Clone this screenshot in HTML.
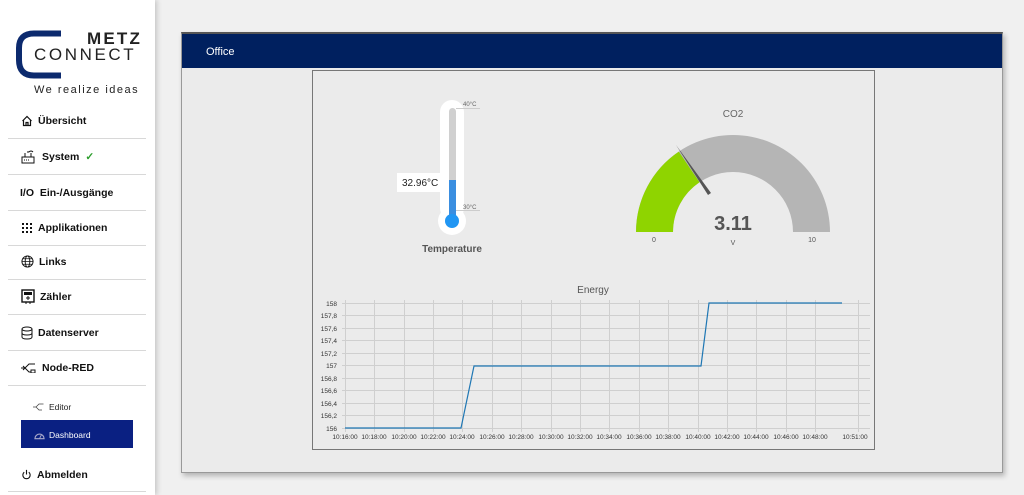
<!DOCTYPE html>
<html><head><meta charset="utf-8">
<style>
*{margin:0;padding:0;box-sizing:border-box}
body{width:1024px;height:495px;overflow:hidden;background:#f0f0f0;font-family:"Liberation Sans",sans-serif;position:relative}
#side{position:absolute;left:0;top:0;width:155px;height:495px;background:#fff;box-shadow:2px 0 5px rgba(0,0,0,.18)}
.item{position:absolute;left:8px;width:138px;height:36px;border-bottom:1px solid #d8d8d8;font-size:10.5px;font-weight:bold;color:#111;display:flex;align-items:center;padding-left:13px}
.item svg{margin-right:5px}
.sub{position:absolute;left:33px;font-size:8.5px;color:#222;display:flex;align-items:center}
#panel{position:absolute;left:181px;top:32px;width:822px;height:441px;background:#ebebeb;border:1px solid #999;border-top:2px solid #555;box-shadow:2px 3px 5px rgba(0,0,0,.25)}
#hdr{position:absolute;left:0;top:0;width:100%;height:34px;background:#00205f;color:#fff;font-size:11px;padding:12px 0 0 24px}
</style></head><body>
<div id="side">
  <svg style="position:absolute;left:15px;top:30px" width="50" height="50"><path d="M46 3.5 H19 Q4 3.5 4 18 V30 Q4 45.5 19 45.5 H46" fill="none" stroke="#0c2a6e" stroke-width="6"/></svg>
  <div style="position:absolute;left:87px;top:29px;font-size:17px;font-weight:bold;letter-spacing:2.2px;color:#222">METZ</div>
  <div style="position:absolute;left:34px;top:45px;font-size:17px;letter-spacing:2.6px;color:#222">CONNECT</div>
  <div style="position:absolute;left:34px;top:84px;font-size:11px;letter-spacing:1.5px;color:#222">We realize ideas</div>
  <div class="item" style="top:103px"><svg width="12" height="12" viewBox="0 0 12 12"><path d="M1.5 6 L6 1.5 L10.5 6 M2.5 5 V10.5 H9.5 V5 M5 10.5 V7.5 H7 V10.5" fill="none" stroke="#111" stroke-width="1.2"/></svg>Übersicht</div>
  <div class="item" style="top:139px"><svg width="16" height="14" viewBox="0 0 16 14"><rect x="1" y="7" width="12" height="6" fill="none" stroke="#111"/><path d="M3 10h1M5 10h1M7 10h1M4 7 V3 M10 7 V3 M8 2 q2 -2 4 0 M7 1 l0 2" fill="none" stroke="#111"/></svg>System <span style="color:#2a9d2a;margin-left:6px">✓</span></div>
  <div class="item" style="top:175px;padding-left:12px">I/O&nbsp; Ein-/Ausgänge</div>
  <div class="item" style="top:210px"><svg width="12" height="10" viewBox="0 0 12 10"><g fill="#111"><rect x="1" y="0" width="2" height="2"/><rect x="5" y="0" width="2" height="2"/><rect x="9" y="0" width="2" height="2"/><rect x="1" y="4" width="2" height="2"/><rect x="5" y="4" width="2" height="2"/><rect x="9" y="4" width="2" height="2"/><rect x="1" y="8" width="2" height="2"/><rect x="5" y="8" width="2" height="2"/><rect x="9" y="8" width="2" height="2"/></g></svg>Applikationen</div>
  <div class="item" style="top:244px"><svg width="13" height="13" viewBox="0 0 14 14"><circle cx="7" cy="7" r="6" fill="none" stroke="#111"/><ellipse cx="7" cy="7" rx="2.5" ry="6" fill="none" stroke="#111"/><path d="M1 7h12M2 4h10M2 10h10" stroke="#111" stroke-width=".8"/></svg>Links</div>
  <div class="item" style="top:279px"><svg width="14" height="16" viewBox="0 0 14 16"><rect x="1" y="1" width="12" height="12" fill="none" stroke="#111" stroke-width="1.4"/><rect x="3" y="3" width="8" height="3" fill="#111"/><path d="M5 9h4M7 7v4M5 13v2M9 13v2" stroke="#111"/></svg>Zähler</div>
  <div class="item" style="top:315px"><svg width="12" height="14" viewBox="0 0 12 14"><ellipse cx="6" cy="3" rx="5" ry="2" fill="none" stroke="#111"/><path d="M1 3v8q0 2 5 2t5-2V3M1 7q0 2 5 2t5-2" fill="none" stroke="#111"/></svg>Datenserver</div>
  <div class="item" style="top:350px;height:36px"><svg width="16" height="10" viewBox="0 0 16 10"><path d="M0 5h4M4 5l4-4h6M4 5l4 4h2M2 3l2 2-2 2" fill="none" stroke="#111"/><rect x="10" y="7" width="4" height="3" fill="none" stroke="#111"/></svg>Node-RED</div>
  <div class="sub" style="top:402px"><svg width="12" height="8" viewBox="0 0 16 10" style="margin-right:4px"><path d="M0 5h4M4 5l4-4h6M4 5l4 4h4" fill="none" stroke="#444"/></svg>Editor</div>
  <div style="position:absolute;left:21px;top:420px;width:112px;height:28px;background:#0a2082;color:#fff;font-size:8.5px;padding:10px 0 0 13px;display:flex;align-items:flex-start"><svg width="11" height="10" viewBox="0 0 12 10" style="margin-right:4px"><path d="M1 9 A5 5 0 1 1 11 9 Z" fill="none" stroke="#aac" stroke-width="1.2"/><path d="M6 9 L8 5" stroke="#aac"/></svg>Dashboard</div>
  <div class="item" style="top:458px;height:34px"><svg width="11" height="11" viewBox="0 0 12 12"><path d="M3.5 3.5 A4 4 0 1 0 8.5 3.5 M6 1 V6" fill="none" stroke="#111" stroke-width="1.2"/></svg>Abmelden</div>
</div>
<div id="panel"><div id="hdr">Office</div></div>
<svg style="position:absolute;left:0;top:0" width="1024" height="495" font-family="Liberation Sans,sans-serif">
  <rect x="312.5" y="70.5" width="562" height="379" fill="#ebebeb" stroke="#777"/>
  <rect x="440" y="100" width="24" height="120" rx="12" fill="#fff"/>
  <circle cx="452" cy="221" r="14" fill="#fff"/>
  <rect x="449" y="108" width="7" height="110" rx="3.5" fill="#d0d0d0"/>
  <rect x="449" y="180" width="7" height="40" fill="#3a8ee0"/>
  <circle cx="452" cy="221" r="7" fill="#2196f3"/>
  <path d="M456 108.5h24M456 210.5h24" stroke="#ccc"/>
  <text x="463" y="106" font-size="6" fill="#666">40°C</text>
  <text x="463" y="209" font-size="6" fill="#666">30°C</text>
  <rect x="397" y="173" width="49" height="19" fill="#fff"/>
  <text x="402" y="186" font-size="10" fill="#222">32.96°C</text>
  <text x="452" y="252" font-size="10" font-weight="bold" fill="#555" text-anchor="middle">Temperature</text>
  <text x="733" y="117" font-size="10" fill="#666" text-anchor="middle">CO2</text>
  <path d="M636 232 A97 97 0 0 1 830 232 L793 232 A60 60 0 0 0 673 232 Z" fill="#b5b5b5"/>
  <path d="M636 232 A97 97 0 0 1 678.8 151.6 L699.5 182.3 A60 60 0 0 0 673 232 Z" fill="#8fd400"/>
  <path d="M676 145 L711 193 L708 195 Z" fill="#555"/>
  <text x="733" y="230" font-size="20" font-weight="bold" fill="#555" text-anchor="middle">3.11</text>
  <text x="654" y="242" font-size="7" fill="#555" text-anchor="middle">0</text>
  <text x="733" y="245" font-size="7" fill="#555" text-anchor="middle">V</text>
  <text x="812" y="242" font-size="7" fill="#555" text-anchor="middle">10</text>
  <text x="593" y="293" font-size="10" fill="#555" text-anchor="middle">Energy</text>
  <g stroke="#cfcfcf" stroke-width="1">
    <path d="M342 303.5H870M342 315.5H870M342 328.5H870M342 340.5H870M342 353.5H870M342 365.5H870M342 378.5H870M342 390.5H870M342 403.5H870M342 415.5H870M342 428.5H870"/>
    <path d="M345.5 300V432M374.5 300V432M404.5 300V432M433.5 300V432M462.5 300V432M492.5 300V432M521.5 300V432M551.5 300V432M580.5 300V432M609.5 300V432M639.5 300V432M668.5 300V432M698.5 300V432M727.5 300V432M756.5 300V432M786.5 300V432M815.5 300V432M858.5 300V432"/>
  </g>
  <g font-size="6.5" fill="#333" text-anchor="end">
    <text x="337" y="306">158</text><text x="337" y="318">157,8</text><text x="337" y="331">157,6</text><text x="337" y="343">157,4</text><text x="337" y="356">157,2</text><text x="337" y="368">157</text><text x="337" y="381">156,8</text><text x="337" y="393">156,6</text><text x="337" y="406">156,4</text><text x="337" y="418">156,2</text><text x="337" y="431">156</text>
  </g>
  <g font-size="6.5" fill="#333" text-anchor="middle">
    <text x="345" y="439">10:16:00</text><text x="374" y="439">10:18:00</text><text x="404" y="439">10:20:00</text><text x="433" y="439">10:22:00</text><text x="462" y="439">10:24:00</text><text x="492" y="439">10:26:00</text><text x="521" y="439">10:28:00</text><text x="551" y="439">10:30:00</text><text x="580" y="439">10:32:00</text><text x="609" y="439">10:34:00</text><text x="639" y="439">10:36:00</text><text x="668" y="439">10:38:00</text><text x="698" y="439">10:40:00</text><text x="727" y="439">10:42:00</text><text x="756" y="439">10:44:00</text><text x="786" y="439">10:46:00</text><text x="815" y="439">10:48:00</text><text x="855" y="439">10:51:00</text>
  </g>
  <path d="M345 428H461L474 366H701L709 303H842" fill="none" stroke="#1f77b4" stroke-width="1.2"/>
</svg>
</body></html>
